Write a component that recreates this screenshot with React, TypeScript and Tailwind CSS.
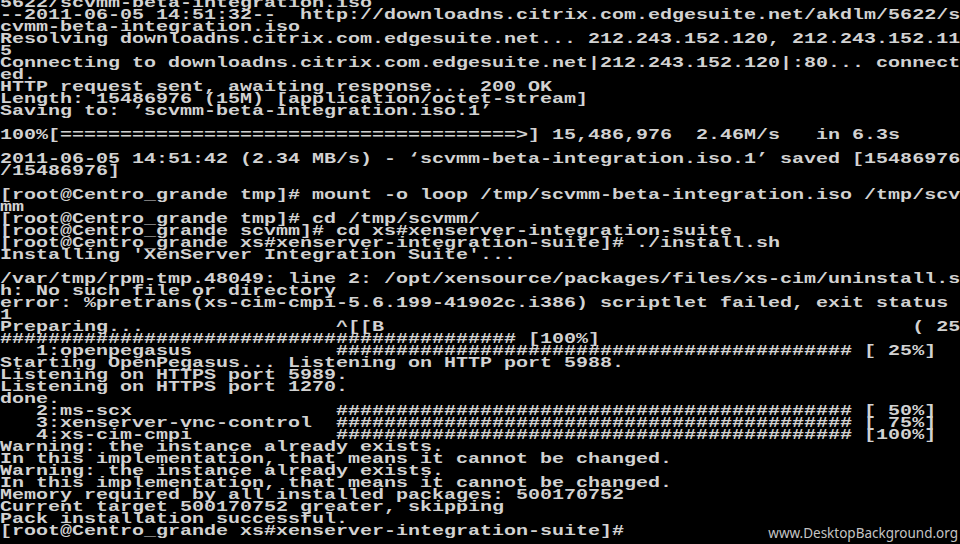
import React from "react";

const H = "###########################################";

const lines: string[] = [
  "5622/scvmm-beta-integration.iso",
  "--2011-06-05 14:51:32--  http://downloadns.citrix.com.edgesuite.net/akdlm/5622/s",
  "cvmm-beta-integration.iso",
  "Resolving downloadns.citrix.com.edgesuite.net... 212.243.152.120, 212.243.152.11",
  "5",
  "Connecting to downloadns.citrix.com.edgesuite.net|212.243.152.120|:80... connect",
  "ed.",
  "HTTP request sent, awaiting response... 200 OK",
  "Length: 15486976 (15M) [application/octet-stream]",
  "Saving to: \u2018scvmm-beta-integration.iso.1\u2019",
  "",
  "100%[======================================>] 15,486,976  2.46M/s   in 6.3s",
  "",
  "2011-06-05 14:51:42 (2.34 MB/s) - \u2018scvmm-beta-integration.iso.1\u2019 saved [15486976",
  "/15486976]",
  "",
  "[root@Centro_grande tmp]# mount -o loop /tmp/scvmm-beta-integration.iso /tmp/scv",
  "mm",
  "[root@Centro_grande tmp]# cd /tmp/scvmm/",
  "[root@Centro_grande scvmm]# cd xs#xenserver-integration-suite",
  "[root@Centro_grande xs#xenserver-integration-suite]# ./install.sh",
  "Installing 'XenServer Integration Suite'...",
  "",
  "/var/tmp/rpm-tmp.48049: line 2: /opt/xensource/packages/files/xs-cim/uninstall.s",
  "h: No such file or directory",
  "error: %pretrans(xs-cim-cmpi-5.6.199-41902c.i386) scriptlet failed, exit status ",
  "1",
  "Preparing...                ^[[B                                            ( 25",
  H + " [100%]",
  "   1:openpegasus            " + H + " [ 25%]",
  "Starting OpenPegasus... Listening on HTTP port 5988.",
  "Listening on HTTPS port 5989.",
  "Listening on HTTPS port 1270.",
  "done.",
  "   2:ms-scx                 " + H + " [ 50%]",
  "   3:xenserver-vnc-control  " + H + " [ 75%]",
  "   4:xs-cim-cmpi            " + H + " [100%]",
  "Warning: the instance already exists.",
  "In this implementation, that means it cannot be changed.",
  "Warning: the instance already exists.",
  "In this implementation, that means it cannot be changed.",
  "Memory required by all installed packages: 500170752",
  "Current target 500170752 greater, skipping",
  "Pack installation successful.",
  "[root@Centro_grande xs#xenserver-integration-suite]#",
];

export default function App() {
  return (
    <div className="relative w-[960px] h-[544px] overflow-hidden bg-black">
      <div
        className="origin-top-left scale-x-[1.3333] w-[720px] -mt-[2px] text-[15px] font-bold text-[#d2d2d2]"
        style={{ fontFamily: '"Liberation Mono", "DejaVu Sans Mono", monospace' }}
      >
        {lines.map((l, i) => (
          <div key={i} className="h-[12px] leading-[12px] whitespace-pre">
            {l || "\u00a0"}
          </div>
        ))}
      </div>
      <div
        className="absolute right-[2px] bottom-[3px] text-[13.5px] leading-[16px] text-[#c4c4c4]"
        style={{ fontFamily: '"Noto Sans", "Open Sans", sans-serif' }}
      >
        www.DesktopBackground.org
      </div>
    </div>
  );
}
